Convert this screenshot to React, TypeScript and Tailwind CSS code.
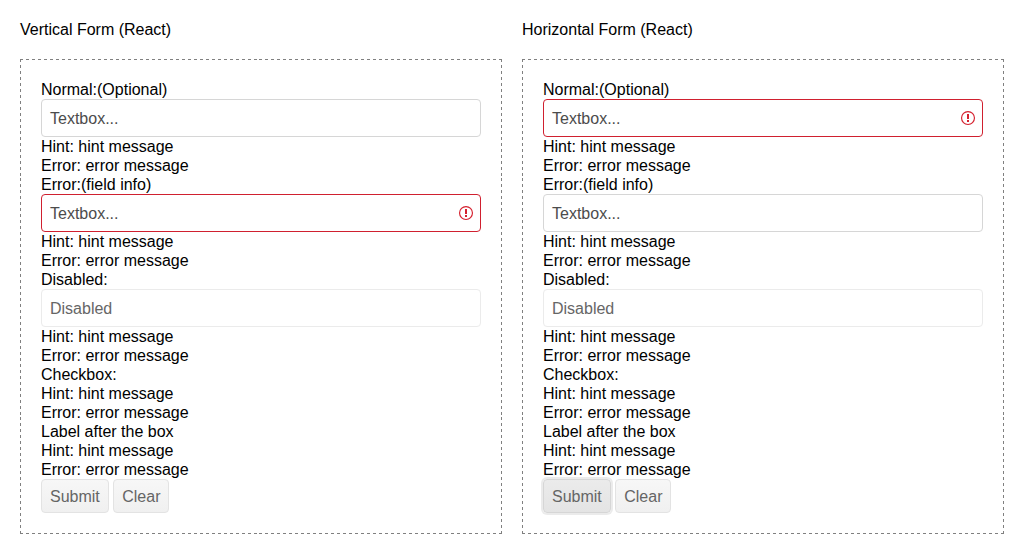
import React from "react";

type FieldState = "normal" | "error" | "disabled";

function WarningIcon() {
  return (
    <svg className="h-4 w-4 shrink-0 text-[#d5202e]" viewBox="0 0 16 16" fill="currentColor">
      <circle cx="8" cy="8" r="6.45" fill="none" stroke="currentColor" strokeWidth="1.15" />
      <path d="M7 4h2v5H7zM7 10h2v2H7z" />
    </svg>
  );
}

const boxStyles: Record<FieldState, string> = {
  normal: "border-[#d6d6d6] text-[#4c4c4c]",
  error: "border-[#d0202f] text-[#4c4c4c]",
  disabled: "border-[#ebebeb] text-[#666666]",
};

function TextBox({ state }: { state: FieldState }) {
  return (
    <div
      className={`flex h-[38px] items-center justify-between rounded-[4px] border bg-white pr-1.5 pl-2 leading-6 ${boxStyles[state]}`}
    >
      <span className="pt-0.5">{state === "disabled" ? "Disabled" : "Textbox..."}</span>
      {state === "error" && <WarningIcon />}
    </div>
  );
}

function Field({ label, box }: { label: string; box?: FieldState }) {
  return (
    <div>
      <div>{label}</div>
      {box && <TextBox state={box} />}
      <div>Hint: hint message</div>
      <div>Error: error message</div>
    </div>
  );
}

// One-pixel dashed frame: 3px dashes, with the gap fitted so that a dash ends at each corner.
const dashedFrame =
  "bg-no-repeat bg-[image:repeating-linear-gradient(90deg,#808080_0_3px,transparent_3px_5.9875px),repeating-linear-gradient(90deg,#808080_0_3px,transparent_3px_5.9875px),repeating-linear-gradient(180deg,#808080_0_3px,transparent_3px_5.9747px),repeating-linear-gradient(180deg,#808080_0_3px,transparent_3px_5.9747px)] [background-position:top,bottom,left,right] [background-size:100%_1px,100%_1px,1px_100%,1px_100%]";

function FormPanel({ title, states, focused }: { title: string; states: FieldState[]; focused?: boolean }) {
  const button = "h-[34px] rounded-[4px] border px-2 text-[#656565] bg-linear-to-b";
  const plain = "border-[#e3e3e3] from-[#f7f7f7] to-[#f0f0f0]";
  const active = "border-[#d6d6d6] from-[#ebebeb] to-[#e4e4e4] shadow-[0_0_0_2px_rgba(0,0,0,0.08)]";
  return (
    <section className="w-[482px]">
      <h1 className="mb-5 leading-[19px]">{title}</h1>
      <div className={`p-[21px] ${dashedFrame}`}>
        <Field label="Normal:(Optional)" box={states[0]} />
        <Field label="Error:(field info)" box={states[1]} />
        <Field label="Disabled:" box={states[2]} />
        <Field label="Checkbox:" />
        <Field label="Label after the box" />
        <div className="flex gap-[4.45px]">
          <button className={`${button} ${focused ? active : plain}`}>Submit</button>
          <button className={`${button} ${plain}`}>Clear</button>
        </div>
      </div>
    </section>
  );
}

export default function App() {
  return (
    <main className="flex h-[554px] gap-5 bg-white p-5 font-['Liberation_Sans',Arial,sans-serif] text-base leading-[19px] text-black">
      <FormPanel title="Vertical Form (React)" states={["normal", "error", "disabled"]} />
      <FormPanel title="Horizontal Form (React)" states={["error", "normal", "disabled"]} focused />
    </main>
  );
}
